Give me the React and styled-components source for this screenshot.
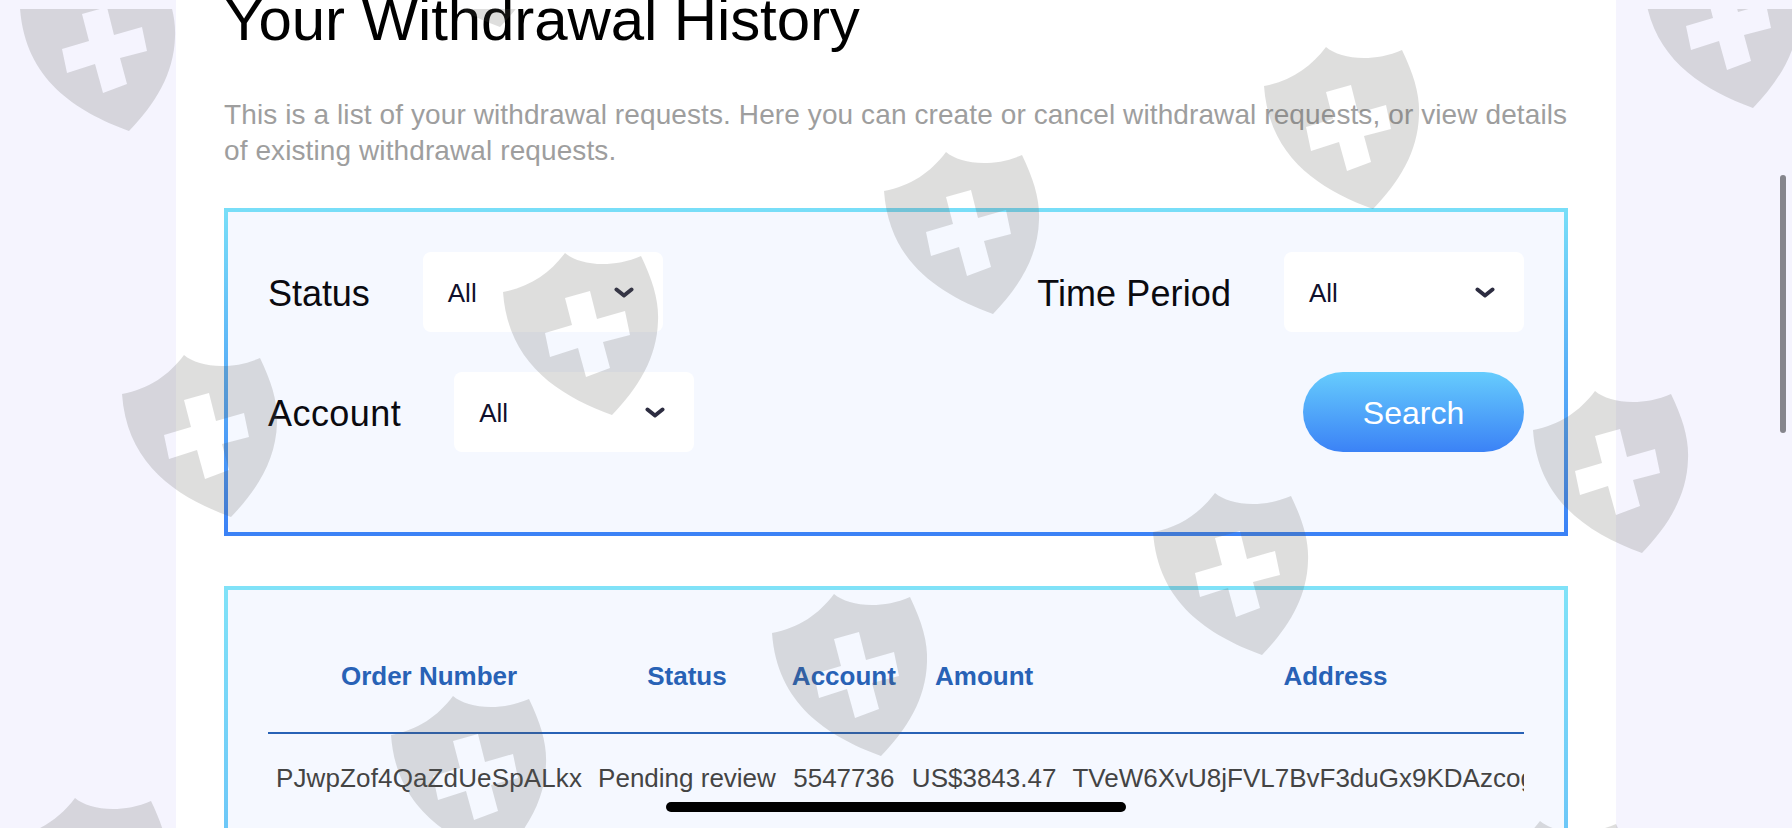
import styled, { createGlobalStyle } from "styled-components";

const GlobalStyle = createGlobalStyle`
  html, body {
    margin: 0;
    padding: 0;
    height: 100%;
    overflow: hidden;
    background: #f5f4fe;
    font-family: "Liberation Sans", Arial, sans-serif;
  }
`;

const Page = styled.div`
  position: relative;
  width: 1792px;
  height: 828px;
  overflow: hidden;
  display: flex;
  justify-content: center;
  background: #f5f4fe;
`;

const Panel = styled.main`
  width: 1440px;
  flex-shrink: 0;
  box-sizing: border-box;
  padding: 0 48px;
  margin-top: -16px;
  background: #fff;
`;

const Title = styled.h1`
  margin: 0 0 41px;
  font-size: 60px;
  line-height: 72px;
  font-weight: 400;
  letter-spacing: -0.1px;
  color: #000;
`;

const Intro = styled.p`
  margin: 0 0 39px;
  font-size: 28px;
  line-height: 36px;
  letter-spacing: 0.1px;
  color: #9e9e9e;
`;

const Box = styled.section`
  box-sizing: border-box;
  border: 4px solid transparent;
  border-image: linear-gradient(180deg, #78def8, #3b82f6) 1;
  background: #f5f8ff;
`;

const FilterBox = styled(Box)`
  display: flex;
  flex-direction: column;
  gap: 40px;
  padding: 40px 40px 80px;
  margin-bottom: 50px;
`;

const TableBox = styled(Box)`
  padding: 40px;
  min-height: 860px;
  border-image: linear-gradient(180deg, #80e2f8, #3b82f6) 1;
`;

const FilterRow = styled.div`
  display: flex;
  align-items: center;
  justify-content: space-between;
`;

const Field = styled.div`
  display: flex;
  align-items: center;
  gap: 53px;
`;

const Label = styled.span`
  padding-top: 4px;
  font-size: 36px;
  line-height: 40px;
  letter-spacing: ${({ $tracking }) => $tracking || "0.1px"};
  color: #0a0a0f;
`;

const Select = styled.div`
  box-sizing: border-box;
  width: 240px;
  height: 80px;
  padding: 2px 29px 0 25px;
  display: flex;
  align-items: center;
  justify-content: space-between;
  background: #fff;
  border-radius: 8px;
  font-size: 26px;
  color: #10102c;
`;

const Chevron = styled.svg`
  width: 20px;
  height: 12px;
  fill: none;
  stroke: #2c2c40;
  stroke-width: 4;
  stroke-linecap: round;
  stroke-linejoin: round;
`;

const SearchButton = styled.button`
  width: 221px;
  height: 80px;
  padding: 2px 0 0;
  border: 0;
  border-radius: 40px;
  background: linear-gradient(180deg, #66ccfd, #3b82f6);
  color: #fff;
  font-family: inherit;
  font-size: 32px;
`;

const TableClip = styled.div`
  overflow: hidden;
`;

const Table = styled.table`
  width: max-content;
  border-collapse: collapse;
  font-size: 26px;
  white-space: nowrap;
`;

const Head = styled.th`
  padding: 31px 8px 41px;
  line-height: 30px;
  font-weight: 700;
  text-align: center;
  color: #2862b6;
  border-bottom: 2px solid #2862b6;
`;

const Cell = styled.td`
  padding: 29px 8px;
  line-height: 30px;
  text-align: center;
  color: #444;

  &:first-child {
    letter-spacing: 0.13px;
  }
`;

const Watermarks = styled.svg`
  position: absolute;
  left: 0;
  top: 9px;
  width: 1792px;
  height: 819px;
  pointer-events: none;
`;

const Shield = styled.path`
  fill: rgba(90, 90, 85, 0.2);
  fill-rule: evenodd;
`;

const ScrollThumb = styled.div`
  position: absolute;
  left: 1780px;
  top: 175px;
  width: 6px;
  height: 258px;
  border-radius: 3px;
  background: #85858c;
`;

const HomeBar = styled.div`
  position: absolute;
  left: 666px;
  bottom: 16px;
  width: 460px;
  height: 10px;
  border-radius: 5px;
  background: #000;
`;

const SHIELD_PATH =
  "M0 39C27 34 47 20 62 0C76 12 108 16 138 3C150 28 156 48 155 68C154 105 135 135 109 162C55 142 5 110 0 39Z" +
  "M62 45L87 38L94 66L122 58L127 82L100 89L107 115L83 124L75 95L47 104L42 80L69 72Z";

const SHIELDS = [
  [20, -31], [391, -135], [1644, -54], [1264, 47], [884, 152], [503, 253], [122, 355],
  [1533, 391], [1153, 493], [772, 594], [391, 696], [13, 798], [1478, 821],
];

const COLUMNS = ["Order Number", "Status", "Account", "Amount", "Address"];
const ROW = ["PJwpZof4QaZdUeSpALkx", "Pending review", "5547736", "US$3843.47", "TVeW6XvU8jFVL7BvF3duGx9KDAzcogQkTd"];

function Dropdown() {
  return (
    <Select>
      All
      <Chevron viewBox="0 0 20 12">
        <path d="M2.5 2.5L10 8.5L17.5 2.5" />
      </Chevron>
    </Select>
  );
}

export default function App() {
  return (
    <>
      <GlobalStyle />
      <Page>
        <Panel>
          <Title>Your Withdrawal History</Title>
          <Intro>
            This is a list of your withdrawal requests. Here you can create or cancel withdrawal requests, or view
            details of existing withdrawal requests.
          </Intro>
          <FilterBox>
            <FilterRow>
              <Field>
                <Label $tracking="-0.05px">Status</Label>
                <Dropdown />
              </Field>
              <Field>
                <Label>Time Period</Label>
                <Dropdown />
              </Field>
            </FilterRow>
            <FilterRow>
              <Field>
                <Label $tracking="0.45px">Account</Label>
                <Dropdown />
              </Field>
              <SearchButton>Search</SearchButton>
            </FilterRow>
          </FilterBox>
          <TableBox>
            <TableClip>
              <Table>
                <thead>
                  <tr>
                    {COLUMNS.map((name) => (
                      <Head key={name}>{name}</Head>
                    ))}
                  </tr>
                </thead>
                <tbody>
                  <tr>
                    {ROW.map((value) => (
                      <Cell key={value}>{value}</Cell>
                    ))}
                  </tr>
                </tbody>
              </Table>
            </TableClip>
          </TableBox>
        </Panel>
        <Watermarks viewBox="0 9 1792 819">
          {SHIELDS.map(([x, y]) => (
            <Shield key={`${x}-${y}`} d={SHIELD_PATH} transform={`translate(${x} ${y})`} />
          ))}
        </Watermarks>
        <ScrollThumb />
        <HomeBar />
      </Page>
    </>
  );
}
